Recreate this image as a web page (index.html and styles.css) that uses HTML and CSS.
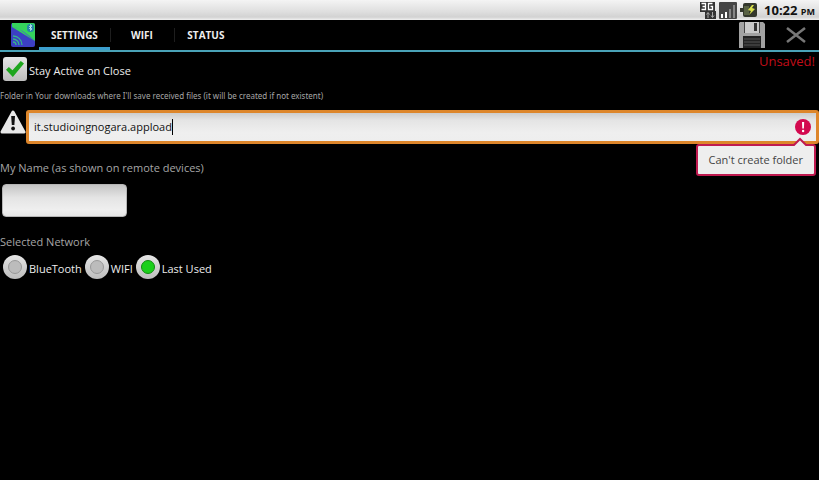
FILE: index.html
```html
<!DOCTYPE html>
<html lang="en">
<head>
    <meta charset="UTF-8">
    <meta name="viewport" content="width=device-width, initial-scale=1.0">
    <title>Settings</title>
    <link rel="stylesheet" href="styles.css">
</head>
<body>
    <div class="status-bar">
        <svg class="status-icon" width="18" height="18" viewBox="0 0 18 18">
            <rect x="1" y="1" width="15" height="10" fill="#333"/>
            <path d="M2.500 2.500h4v6h-4M3.500 5.500h3M13.500 2.500h-4v6h4v-3h-2" fill="none" stroke="#fff" stroke-width="1.300"/>
            <rect x="6" y="10" width="11" height="8" fill="#333"/>
            <path d="M9 17v-5M7.500 13.500L9 11.500l1.500 2M13.500 11v5M12 14.500l1.500 2 1.500-2" fill="none" stroke="#aaa"/>
        </svg>
        <svg class="status-icon" width="18" height="18" viewBox="0 0 18 18">
            <rect y="1" width="18" height="17" rx="1" fill="#444"/>
            <path d="M2 13h2v4H2z" fill="#fff"/>
            <path d="M6 11h2v6H6z" fill="#fff"/>
            <path d="M10 8h2v9h-2zM14 4h2v13h-2z" fill="#858585"/>
        </svg>
        <svg class="status-icon" width="19" height="18" viewBox="0 0 19 18">
            <path d="M1 7h3V4q0-2 2-2h10q2 0 2 2v10q0 2-2 2H6q-2 0-2-2v-3H1z" fill="#33372c"/>
            <path d="M5 5h5v9H5z" fill="#586144"/>
            <path d="M13 4L9 9l3 1-2 4 6-6-3-1 2-3z" fill="#d8e04c"/>
        </svg>
        <span class="clock">10:22 <small>PM</small></span>
    </div>

    <header class="action-bar">
        <svg class="app-icon" width="26" height="26" viewBox="0 0 26 26">
            <rect x="1" y="1" width="24" height="24" rx="2" fill="#3c3fc4"/>
            <path d="M2 1h21q2 0 2 2v16L2 5z" fill="#35d45c"/>
            <path d="M1 4q12 3 24 15L9 7z" fill="#4a50dd"/>
            <rect x="17" y="2" width="7" height="8" rx="3" fill="#2687a8"/>
            <path d="M19 4l3 3-1.500 1.500v-6L22 4l-3 3" fill="none" stroke="#d5f4ff" stroke-width=".7"/>
            <path d="M3 20a3 3 0 0 1 3 3M3 17a6 6 0 0 1 6 6M3 14a9 9 0 0 1 9 9" fill="none" stroke="#35b58c" stroke-width="1.300"/>
        </svg>
        <nav class="tabs">
            <button class="tab active" type="button">SETTINGS</button>
            <button class="tab" type="button">WIFI</button>
            <button class="tab" type="button">STATUS</button>
        </nav>
        <div class="actions">
            <button class="action" type="button" aria-label="Save">
                <svg width="26" height="26" viewBox="0 0 26 26">
                    <path d="M1 0h23l2 2v24H0V1z" fill="#a2a2a2"/>
                    <path d="M5 0h16v11H5z" fill="#c9c9c9"/>
                    <path d="M5 0h1v11H5zM20 0h1v11h-1z" fill="#444"/>
                    <rect x="15" y="1" width="3" height="8" fill="#333"/>
                    <rect x="4" y="14" width="18" height="12" fill="#222"/>
                    <path d="M5 17h16M5 20h16M5 23h16" stroke="#555"/>
                </svg>
            </button>
            <button class="action" type="button" aria-label="Close">
                <svg width="20" height="16" viewBox="0 0 20 16">
                    <path d="M1 1l18 14M19 1L1 15" stroke="#777" stroke-width="2.500"/>
                </svg>
            </button>
        </div>
    </header>

    <main class="settings">
        <div class="top-row">
            <label class="option"><input class="check" type="checkbox" checked><span class="option-text">Stay Active on Close</span></label>
            <span class="unsaved">Unsaved!</span>
        </div>

        <label class="hint" for="folder">Folder in Your downloads where I'll save received files (it will be created if not existent)</label>
        <div class="folder-row">
            <svg class="warning" width="26" height="24" viewBox="0 0 26 24">
                <path d="M13 2L24 22H2z" fill="#e8e8e8" stroke="#e8e8e8" stroke-width="3" stroke-linejoin="round"/>
                <path d="M11.200 6h3.800l-.6 9h-2.600z" fill="#111"/>
                <circle cx="13.100" cy="18.500" r="1.900" fill="#111"/>
            </svg>
            <div class="folder-field">
                <input class="folder-input" id="folder" type="text" value="it.studioingnogara.appload">
                <span class="caret"></span>
                <svg class="error-icon" width="16" height="16" viewBox="0 0 16 16">
                    <circle cx="8" cy="8" r="8" fill="#d3094f"/>
                    <path d="M7 3h2.200l-.3 6.500H7.300z" fill="#fff"/>
                    <circle cx="8.100" cy="12" r="1.200" fill="#fff"/>
                </svg>
                <div class="error-popup" role="alert">
                    Can't create folder
                    <svg class="error-arrow" width="14" height="9" viewBox="0 0 14 9">
                        <path d="M0 9L7 1l7 8z" fill="#eee"/>
                        <path d="M0 8h1l6-6 6 6h1" fill="none" stroke="#c01a50" stroke-width="2"/>
                    </svg>
                </div>
            </div>
        </div>

        <label class="caption" for="name">My Name (as shown on remote devices)</label>
        <input class="name-input" id="name" type="text">

        <div class="caption" id="network">Selected Network</div>
        <div class="networks" role="radiogroup" aria-labelledby="network">
            <label class="option"><input class="radio" type="radio" name="network"><span class="option-text">BlueTooth</span></label>
            <label class="option"><input class="radio" type="radio" name="network"><span class="option-text">WIFI</span></label>
            <label class="option"><input class="radio" type="radio" name="network" checked><span class="option-text">Last Used</span></label>
        </div>
    </main>
</body>
</html>
```
FILE: styles.css
```css
* {
    box-sizing: border-box;
}
body {
    margin: 0;
    background-color: #000;
    color: #ececec;
    font-family: 'Open Sans', 'Noto Sans', sans-serif;
    font-size: 11px;
    line-height: 16px;
}
svg {
    display: block;
    flex: none;
}
button, input {
    font: inherit;
    margin: 0;
}
.status-bar {
    display: flex;
    align-items: center;
    justify-content: flex-end;
    gap: 2px;
    height: 20px;
    padding-right: 4px;
    background: linear-gradient(#f4f4f4, #dedede 60%, #d2d2d2 85%, #f0f0f0);
    color: #111;
}
.clock {
    margin-left: 4px;
    padding-top: 1px;
    font-size: 13px;
    font-weight: bold;
    white-space: nowrap;
}
.clock small {
    font-size: 9px;
}
.action-bar {
    display: flex;
    align-items: center;
    height: 32px;
    padding-left: 10px;
    border-bottom: 2px solid #4aa3b8;
}
.tabs {
    display: flex;
    align-self: stretch;
    margin-left: 3px;
}
.tab {
    position: relative;
    min-width: 64px;
    padding: 3px 12px 0;
    border: none;
    border-bottom: 3px solid transparent;
    background: none;
    color: #eee;
    font-size: 10px;
    font-weight: bold;
    cursor: pointer;
}
.tab.active {
    border-bottom-color: #3c9fce;
}
.tab + .tab::before {
    content: "";
    position: absolute;
    left: 0;
    top: 8px;
    width: 1px;
    height: 14px;
    background-color: #1e1e1e;
}
.actions {
    display: flex;
    align-items: center;
    gap: 21px;
    margin-left: auto;
    padding-right: 13px;
}
.action {
    padding: 0;
    border: none;
    background: none;
    cursor: pointer;
}
.top-row {
    display: flex;
    justify-content: space-between;
    align-items: flex-start;
    padding: 1px 4px 0 3px;
}
.top-row .option {
    margin-top: 4px;
}
.option {
    display: flex;
    align-items: center;
    gap: 2px;
    white-space: nowrap;
}
.option-text {
    padding-top: 3px;
}
.check, .radio {
    appearance: none;
    flex: none;
    display: grid;
    place-items: center;
    width: 24px;
    height: 24px;
    background: linear-gradient(#e6e6e6, #bdbdbd);
}
.check {
    border-radius: 3px;
}
.check:checked::before {
    content: "";
    width: 18px;
    height: 16px;
    background-color: #1ea61e;
    clip-path: polygon(0 55%, 16% 38%, 36% 58%, 82% 0, 100% 16%, 38% 100%);
}
.radio {
    border-radius: 50%;
}
.radio::before {
    content: "";
    width: 12px;
    height: 12px;
    border: 1px solid #999;
    border-radius: 50%;
    background-color: #bcbcbc;
}
.radio:checked::before {
    border-color: #128a12;
    background-color: #1bd01b;
}
.unsaved {
    color: #c00d18;
    font-size: 13px;
}
.hint {
    display: block;
    margin-top: 7px;
    color: #a6a6a6;
    font-family: 'Noto Sans', sans-serif;
    font-size: 8px;
}
.folder-row {
    display: flex;
    align-items: flex-start;
    margin-top: 6px;
}
.folder-field {
    position: relative;
    flex: 1;
    display: flex;
    align-items: center;
    height: 34px;
    padding: 0 5px;
    border: 3px solid #dd862b;
    border-radius: 3px;
    background: linear-gradient(#ccc, #e4e4e4 25%, #efefef 70%, #eee);
}
.folder-input {
    field-sizing: content;
    padding: 0;
    border: none;
    outline: none;
    background: none;
    color: #111;
}
.caret {
    width: 1px;
    height: 16px;
    background-color: #000;
}
.error-icon {
    margin-left: auto;
}
.error-popup {
    position: absolute;
    top: 31px;
    right: 0;
    padding: 6px 11px;
    border: 2px solid #c01a50;
    border-radius: 3px;
    background-color: #eee;
    color: #444;
    white-space: nowrap;
}
.error-arrow {
    position: absolute;
    top: -9px;
    right: 7px;
}
.caption {
    display: block;
    margin-top: 16px;
    color: #a6a6a6;
}
.name-input {
    display: block;
    width: 125px;
    height: 33px;
    margin: 8px 2px 0;
    padding: 0 8px;
    border: 1px solid #b5b5b5;
    border-radius: 4px;
    background: linear-gradient(#c4c4c4, #e4e4e4 40%, #efefef 80%, #e6e6e6);
    color: #222;
}
#network {
    margin-top: 17px;
}
.networks {
    display: flex;
    gap: 3px;
    margin-top: 5px;
    padding-left: 3px;
}
```
